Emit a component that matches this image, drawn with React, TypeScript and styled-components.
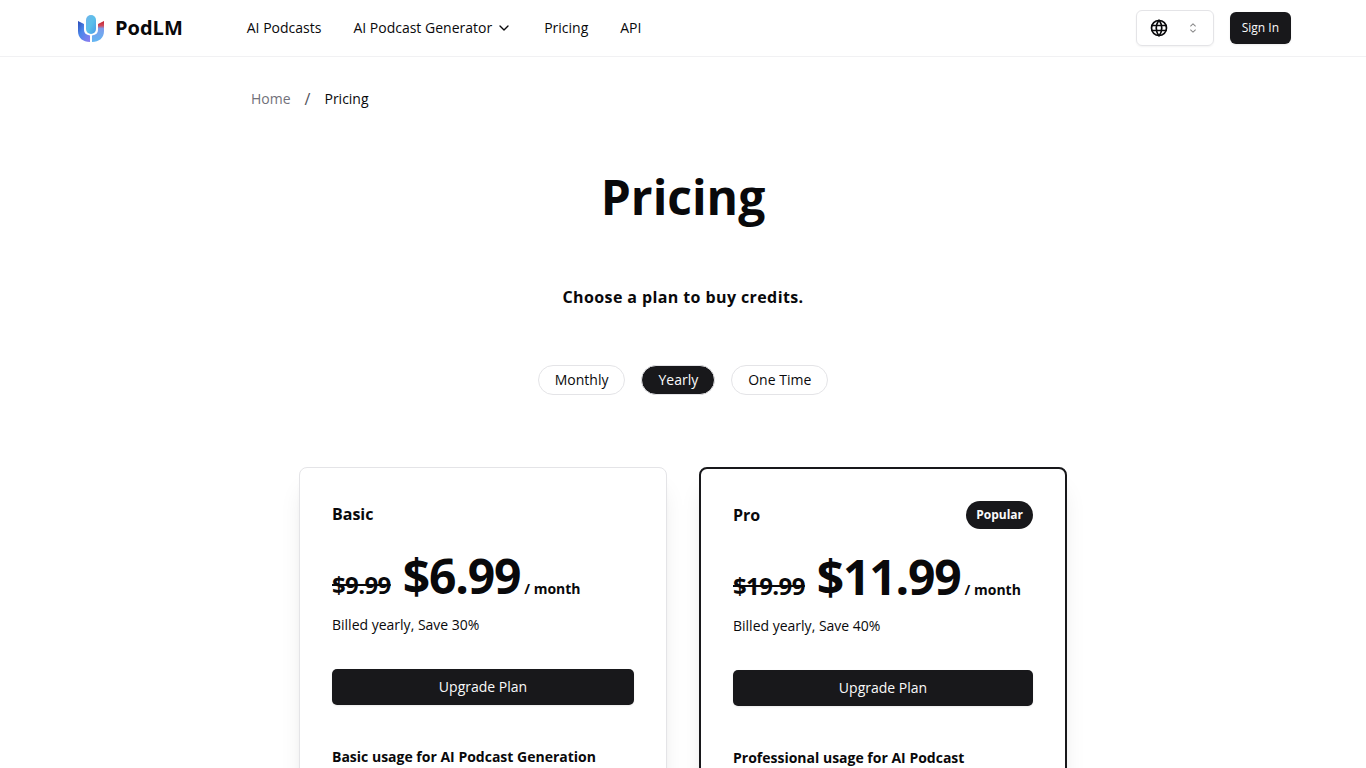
import React, { useState } from "react";
import styled, { createGlobalStyle } from "styled-components";
import { ChevronDown } from "lucide-react";
import { RxCaretSort } from "react-icons/rx";

const ink = "#09090b";
const dark = "#18181b";
const line = "#e4e4e7";

const GlobalStyle = createGlobalStyle`
  *, *::before, *::after { box-sizing: border-box; }
  body {
    margin: 0;
    background: #fff;
    color: ${ink};
    font-family: "Open Sans", "Noto Sans", sans-serif;
    font-size: 16px;
    line-height: 24px;
    overflow-x: hidden;
  }
  h1, h2, h3, p { margin: 0; }
  a { color: inherit; text-decoration: none; }
  button { font: inherit; color: inherit; cursor: pointer; }
`;

const Header = styled.header`
  border-bottom: 1px solid #f1f1f3;
`;

const HeaderInner = styled.div`
  display: flex;
  align-items: center;
  justify-content: space-between;
  height: 56px;
  max-width: 1280px;
  margin: 0 auto;
  padding: 0 32px;
`;

const Cluster = styled.div<{ $gap: number }>`
  display: flex;
  align-items: center;
  gap: ${(p) => p.$gap}px;
`;

const Brand = styled.a`
  display: flex;
  align-items: center;
  gap: 8px;
  font-size: 20px;
  line-height: 28px;
  font-weight: 700;
`;

const Nav = styled.nav`
  display: flex;
  align-items: center;
  gap: 32px;
  font-size: 14px;
  line-height: 20px;
`;

const NavButton = styled.button`
  display: flex;
  align-items: center;
  gap: 4px;
  padding: 0;
  border: 0;
  background: none;
`;

const Language = styled.label`
  position: relative;
  display: flex;
  align-items: center;
  justify-content: space-between;
  width: 78px;
  height: 36px;
  padding: 0 12px;
  border: 1px solid ${line};
  border-radius: 6px;
  box-shadow: 0 1px 2px rgba(0, 0, 0, 0.05);
`;

const LanguageSelect = styled.select`
  position: absolute;
  inset: 0;
  width: 100%;
  opacity: 0;
`;

const SolidButton = styled.button<{ $small?: boolean }>`
  height: ${(p) => (p.$small ? 32 : 36)}px;
  padding: 0 12px;
  border: 0;
  border-radius: ${(p) => (p.$small ? 6 : 5)}px;
  background: ${dark};
  color: #fafafa;
  font-size: ${(p) => (p.$small ? 12 : 14)}px;
  line-height: 20px;
  box-shadow: 0 1px 2px rgba(0, 0, 0, 0.08);
`;

const Main = styled.main`
  max-width: 928px;
  margin: 0 auto;
  padding: 32px;
`;

const Breadcrumb = styled.nav`
  display: flex;
  gap: 14px;
  font-size: 14px;
  line-height: 20px;
`;

const Muted = styled.a`
  color: #71717a;
`;

const Slash = styled.span`
  color: #52525b;
  font-size: 16px;
`;

const Hero = styled.section`
  display: flex;
  flex-direction: column;
  align-items: center;
  padding-top: 64px;
  text-align: center;
`;

const Title = styled.h1`
  font-size: 48px;
  line-height: 48px;
  font-weight: 700;
`;

const Subtitle = styled.h2`
  margin-top: 64px;
  font-size: 16px;
  line-height: 24px;
  font-weight: 700;
  letter-spacing: 0.025em;
`;

const Periods = styled.div`
  display: flex;
  gap: 16px;
  margin-top: 56px;
`;

const Period = styled.button<{ $active: boolean }>`
  height: 30px;
  padding: 0 16px;
  border: 1px solid ${line};
  border-radius: 15px;
  background: ${(p) => (p.$active ? dark : "#fff")};
  color: ${(p) => (p.$active ? "#fafafa" : ink)};
  font-size: 14px;
  line-height: 20px;
`;

const Plans = styled.section`
  display: grid;
  grid-template-columns: repeat(auto-fit, minmax(300px, 1fr));
  gap: 32px;
  margin-top: 72px;
  padding: 0 48px;
`;

const Card = styled.article<{ $featured: boolean }>`
  display: flex;
  flex-direction: column;
  padding: 32px;
  border: ${(p) => (p.$featured ? `2px solid ${dark}` : `1px solid ${line}`)};
  border-radius: 8px;
  background: #fff;
  box-shadow: 0 20px 25px -5px rgba(0, 0, 0, 0.1), 0 8px 10px -6px rgba(0, 0, 0, 0.1);
`;

const CardHead = styled.div`
  display: flex;
  align-items: center;
  justify-content: space-between;
  min-height: 28px;
`;

const PlanName = styled.h3`
  font-size: 16px;
  line-height: 24px;
  font-weight: 700;
`;

const Badge = styled.span`
  padding: 4px 10px;
  border-radius: 14px;
  background: ${dark};
  color: #fafafa;
  font-size: 12px;
  line-height: 20px;
  font-weight: 700;
`;

const PriceLine = styled.p`
  display: flex;
  align-items: baseline;
  margin-top: 24px;
  font-size: 48px;
  line-height: 48px;
  font-weight: 700;
`;

const Price = styled.span`
  letter-spacing: -0.025em;
`;

const OldPrice = styled.s`
  margin-right: 12px;
  font-size: 24px;
  line-height: 32px;
  letter-spacing: -0.025em;
`;

const Unit = styled.span`
  margin-left: 4px;
  font-size: 14px;
  line-height: 20px;
`;

const Billing = styled.p`
  margin: 14px 0 34px;
  font-size: 14px;
  line-height: 20px;
`;

const Usage = styled.p`
  margin-top: 40px;
  font-size: 14px;
  line-height: 24px;
  font-weight: 700;
`;

const Logo = () => (
  <svg width="32" height="32" viewBox="0 0 32 32" aria-hidden="true">
    <defs>
      <linearGradient id="mic" x1="0" y1="0" x2="1" y2="1">
        <stop offset="0" stopColor="#6fb4ea" />
        <stop offset="0.5" stopColor="#5cc0ea" />
        <stop offset="1" stopColor="#4a9be6" />
      </linearGradient>
      <linearGradient id="left" x1="0" y1="0" x2="1" y2="1">
        <stop offset="0" stopColor="#2c4bb8" />
        <stop offset="0.4" stopColor="#4a86ea" />
        <stop offset="1" stopColor="#8f7cf0" />
      </linearGradient>
      <linearGradient id="right" x1="0" y1="0" x2="0" y2="1">
        <stop offset="0" stopColor="#c4202c" />
        <stop offset="0.22" stopColor="#d04a5c" />
        <stop offset="0.36" stopColor="#7d9cec" />
        <stop offset="1" stopColor="#62b6f2" />
      </linearGradient>
    </defs>
    <path d="M3 9l6 3v6c0 3 2 5 6 5.500v6.500C8 30 3 26 3 19z" fill="url(#left)" />
    <path d="M29 9l-6 3v6c0 3-2 5-6 5.500v6.500c7 0 12-4 12-11z" fill="url(#right)" />
    <rect x="10" y="2" width="12" height="21" rx="6" fill="#fff" />
    <rect x="11" y="3" width="10" height="19" rx="5" fill="url(#mic)" />
  </svg>
);

const Globe = () => (
  <svg width="20" height="20" viewBox="0 0 24 24" fill="none" stroke="currentColor" strokeWidth="2" strokeLinecap="round" aria-hidden="true">
    <circle cx="12" cy="12" r="9" />
    <path d="M3.600 9h16.800M3.600 15h16.800" />
    <path d="M11.500 3a17 17 0 0 0 0 18M12.500 3a17 17 0 0 1 0 18" />
  </svg>
);

const plans = [
  { name: "Basic", old: "$9.99", price: "$6.99", billing: "Billed yearly, Save 30%", usage: "Basic usage for AI Podcast Generation", featured: false },
  { name: "Pro", old: "$19.99", price: "$11.99", billing: "Billed yearly, Save 40%", usage: "Professional usage for AI Podcast Generation", featured: true },
];

const periods = ["Monthly", "Yearly", "One Time"];

export default function App() {
  const [period, setPeriod] = useState("Yearly");
  return (
    <>
      <GlobalStyle />
      <Header>
        <HeaderInner>
          <Cluster $gap={64}>
            <Brand href="#home"><Logo />PodLM</Brand>
            <Nav aria-label="Main">
              <a href="#podcasts">AI Podcasts</a>
              <NavButton type="button">AI Podcast Generator<ChevronDown size={16} /></NavButton>
              <a href="#pricing">Pricing</a>
              <a href="#api">API</a>
            </Nav>
          </Cluster>
          <Cluster $gap={16}>
            <Language>
              <Globe />
              <LanguageSelect aria-label="Language" defaultValue="en">
                <option value="en">English</option>
              </LanguageSelect>
              <RxCaretSort size={16} opacity={0.5} />
            </Language>
            <SolidButton type="button" $small>Sign In</SolidButton>
          </Cluster>
        </HeaderInner>
      </Header>
      <Main>
        <Breadcrumb aria-label="Breadcrumb">
          <Muted href="#home">Home</Muted>
          <Slash>/</Slash>
          <a href="#pricing" aria-current="page">Pricing</a>
        </Breadcrumb>
        <Hero>
          <Title>Pricing</Title>
          <Subtitle>Choose a plan to buy credits.</Subtitle>
          <Periods>
            {periods.map((p) => (
              <Period key={p} type="button" $active={p === period} aria-pressed={p === period} onClick={() => setPeriod(p)}>{p}</Period>
            ))}
          </Periods>
        </Hero>
        <Plans>
          {plans.map((p) => (
            <Card key={p.name} $featured={p.featured}>
              <CardHead>
                <PlanName>{p.name}</PlanName>
                {p.featured && <Badge>Popular</Badge>}
              </CardHead>
              <PriceLine><OldPrice>{p.old}</OldPrice><Price>{p.price}</Price><Unit>/ month</Unit></PriceLine>
              <Billing>{p.billing}</Billing>
              <SolidButton type="button">Upgrade Plan</SolidButton>
              <Usage>{p.usage}</Usage>
            </Card>
          ))}
        </Plans>
      </Main>
    </>
  );
}
